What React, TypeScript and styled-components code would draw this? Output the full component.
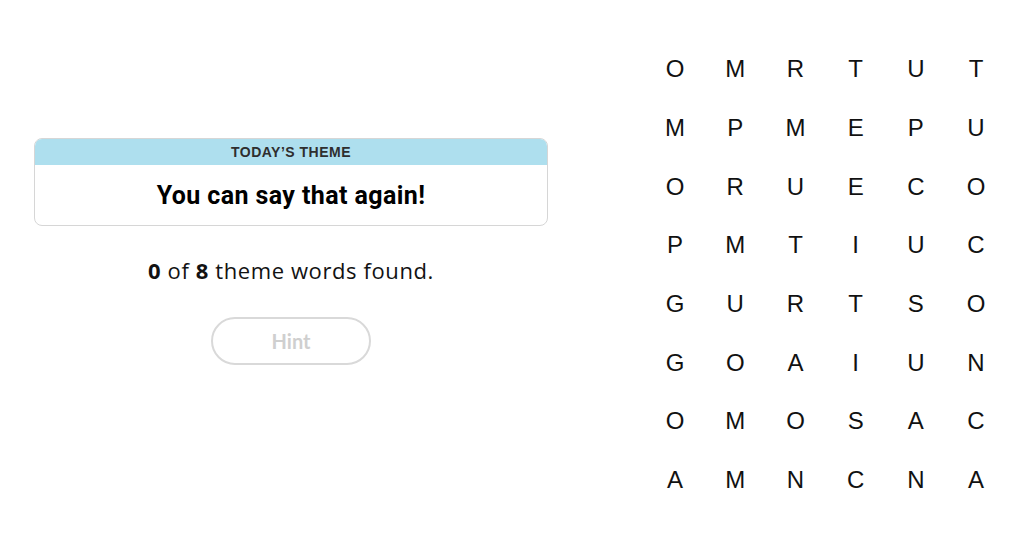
import React from "react";
import styled, { createGlobalStyle } from "styled-components";

const Global = createGlobalStyle`
  html, body { margin: 0; padding: 0; background: #fff; }
  body { font-family: "Liberation Sans", Arial, sans-serif; color: #000; }
`;

const Page = styled.div`
  width: 1024px;
  height: 556px;
  display: flex;
  align-items: flex-start;
  box-sizing: border-box;
`;

const LeftPanel = styled.section`
  width: 514px;
  margin-left: 34px;
  margin-top: 138px;
  display: flex;
  flex-direction: column;
  align-items: center;
`;

const ThemeCard = styled.div`
  width: 100%;
  box-sizing: border-box;
  border: 1px solid #d6d6d6;
  border-radius: 8px;
  overflow: hidden;
`;

const ThemeHeader = styled.div`
  height: 26px;
  background: #aedfee;
  display: flex;
  align-items: center;
  justify-content: center;
  font-family: "Liberation Sans", Arial, sans-serif;
  font-weight: 700;
  font-size: 14px;
  letter-spacing: 0.5px;
  color: #2e2e2e;
`;

const ThemeBody = styled.div`
  height: 60px;
  display: flex;
  align-items: center;
  justify-content: center;
  font-family: "Roboto", "Liberation Sans", sans-serif;
  font-weight: 700;
  font-size: 25px;
  letter-spacing: 0.4px;
  color: #000;
`;

const Progress = styled.p`
  margin: 29px 0 0;
  font-family: "Open Sans", "Liberation Sans", sans-serif;
  font-size: 22px;
  letter-spacing: 0.6px;
  color: #121212;
  b { font-weight: 700; }
`;

const HintButton = styled.button`
  margin-top: 32px;
  width: 160px;
  height: 48px;
  border-radius: 24px;
  border: 2px solid #d9d9d9;
  background: #fff;
  font-family: "Lato", "Liberation Sans", sans-serif;
  font-weight: 700;
  font-size: 20px;
  color: #cfcfcf;
  cursor: default;
`;

const Board = styled.div`
  margin-left: 97px;
  margin-top: 40px;
  display: grid;
  grid-template-columns: repeat(6, 60.2px);
  grid-auto-rows: 58.7px;
`;

const Cell = styled.div`
  display: flex;
  align-items: center;
  justify-content: center;
  font-family: "Liberation Sans", Arial, sans-serif;
  font-size: 24px;
  color: #111;
`;

const rows = [
  "OMRTUT",
  "MPMEPU",
  "ORUECO",
  "PMTIUC",
  "GURTSO",
  "GOAIUN",
  "OMOSAC",
  "AMNCNA",
];

export default function App() {
  return (
    <>
      <Global />
      <Page>
        <LeftPanel>
          <ThemeCard>
            <ThemeHeader>TODAY’S THEME</ThemeHeader>
            <ThemeBody>You can say that again!</ThemeBody>
          </ThemeCard>
          <Progress>
            <b>0</b> of <b>8</b> theme words found.
          </Progress>
          <HintButton>Hint</HintButton>
        </LeftPanel>
        <Board>
          {rows.flatMap((r, i) =>
            r.split("").map((c, j) => <Cell key={`${i}-${j}`}>{c}</Cell>)
          )}
        </Board>
      </Page>
    </>
  );
}
